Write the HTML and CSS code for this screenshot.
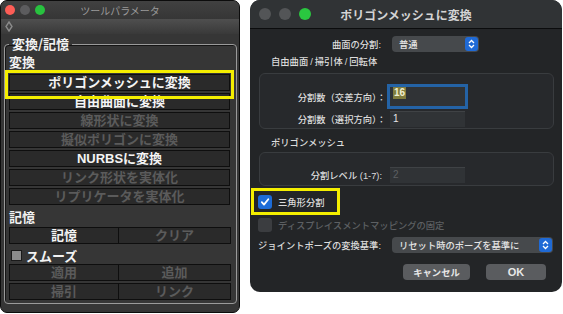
FILE: index.html
```html
<!DOCTYPE html>
<html>
<head>
<meta charset="utf-8">
<link rel="stylesheet" href="styles.css">
</head>
<body>
<div class="desk">

  <div class="tp">
    <div class="tp-title">
      <div class="tp-lights">
        <span class="tl tl-red"></span><span class="tl tl-gray"></span><span class="tl tl-green"></span>
      </div>
      <div class="tp-title-text">ツールパラメータ</div>
      <div></div>
    </div>
    <div class="tp-strip">
      <svg width="8" height="11" viewBox="0 0 8 11"><path d="M4 1 L7 5.5 L4 10 L1 5.5 Z" fill="none" stroke="#8a8a8a" stroke-width="1.4"/></svg>
    </div>
    <fieldset class="tp-group">
      <legend>変換/記憶</legend>
      <div class="tp-label">変換</div>
      <div class="tp-btn first">ポリゴンメッシュに変換</div>
      <div class="tp-btn">自由曲面に変換</div>
      <div class="tp-btn off">線形状に変換</div>
      <div class="tp-btn off">擬似ポリゴンに変換</div>
      <div class="tp-btn">NURBSに変換</div>
      <div class="tp-btn off">リンク形状を実体化</div>
      <div class="tp-btn off">リプリケータを実体化</div>
      <div class="tp-label tp-label2">記憶</div>
      <div class="tp-pair">
        <div class="tp-half">記憶</div>
        <div class="tp-half off">クリア</div>
      </div>
      <div class="tp-check"><span class="tp-box"></span>スムーズ</div>
      <div class="tp-pair tight">
        <div class="tp-half off">適用</div>
        <div class="tp-half off">追加</div>
      </div>
      <div class="tp-pair">
        <div class="tp-half off">掃引</div>
        <div class="tp-half off">リンク</div>
      </div>
    </fieldset>
    <div class="mark mark-tp"></div>
  </div>

  <div class="dlg">
    <div class="dlg-title">
      <div class="dlg-lights">
        <span class="dl dl-gray"></span><span class="dl dl-gray"></span><span class="dl dl-green"></span>
      </div>
      <div class="dlg-title-text">ポリゴンメッシュに変換</div>
      <div></div>
    </div>
    <div class="dlg-body">
      <div class="frow row-top">
        <div class="flabel w-top">曲面の分割:</div>
        <div class="popup popup-small">
          <span>普通</span>
          <span class="stepper">
            <svg width="7" height="10" viewBox="0 0 7 10"><path d="M1 4 L3.5 1.5 L6 4 M1 6 L3.5 8.5 L6 6" fill="none" stroke="#fff" stroke-width="1.3"/></svg>
          </span>
        </div>
      </div>

      <div class="sect">自由曲面<span class="sl">/</span>掃引体<span class="sl">/</span>回転体</div>
      <div class="group group1">
        <div class="frow">
          <div class="flabel w-grp">分割数（交差方向）：</div>
          <div class="field focus"><span class="sel">16</span></div>
        </div>
        <div class="frow row-2">
          <div class="flabel w-grp">分割数（選択方向）：</div>
          <div class="field">1</div>
        </div>
      </div>

      <div class="sect sect2">ポリゴンメッシュ</div>
      <div class="group group2">
        <div class="frow">
          <div class="flabel w-lvl">分割レベル (1-7):</div>
          <div class="field dim">2</div>
        </div>
      </div>

      <div class="crow crow1">
        <span class="cbox on">
          <svg width="10" height="10" viewBox="0 0 10 10"><path d="M1.8 5.2 L4 7.6 L8.3 2.2" fill="none" stroke="#fff" stroke-width="1.8" stroke-linecap="round" stroke-linejoin="round"/></svg>
        </span>
        <span>三角形分割</span>
      </div>
      <div class="crow crow2 dim">
        <span class="cbox"></span>
        <span>ディスプレイスメントマッピングの固定</span>
      </div>

      <div class="frow row-joint">
        <div class="flabel w-joint">ジョイントポーズの変換基準:</div>
        <div class="popup popup-wide">
          <span>リセット時のポーズを基準に</span>
          <span class="stepper">
            <svg width="7" height="10" viewBox="0 0 7 10"><path d="M1 4 L3.5 1.5 L6 4 M1 6 L3.5 8.5 L6 6" fill="none" stroke="#fff" stroke-width="1.3"/></svg>
          </span>
        </div>
      </div>

      <div class="brow">
        <div class="pbtn pbtn-cancel">キャンセル</div>
        <div class="pbtn pbtn-ok">OK</div>
      </div>
    </div>
    <div class="mark mark-dlg"></div>
  </div>

</div>
</body>
</html>
```
FILE: styles.css
```css
*{
    box-sizing: border-box;
}

body{
    margin: 0;
    background: #ffffff;
    font-family: "Liberation Sans", "Noto Sans CJK JP", sans-serif;
}

.desk{
    display: flex;
    align-items: flex-start;
    gap: 10px;
}

/* ---- tool parameter window ---- */

.tp{
    position: relative;
    width: 240px;
    height: 313px;
    background-color: #363636;
    border: 1px solid #0c0c0c;
    border-radius: 7px;
    overflow: hidden;
}

.tp-title{
    height: 18px;
    display: grid;
    grid-template-columns: 1fr auto 1fr;
    align-items: center;
    background: linear-gradient(#414141, #363636);
}

.tp-lights{
    display: flex;
    gap: 5px;
    padding-left: 4px;
}

.tl{
    width: 10px;
    height: 10px;
    border-radius: 50%;
}

.tl-red{ background-color: #fd5d56; }
.tl-gray{ background-color: #5c5c5e; }
.tl-green{ background-color: #28c23f; }

.tp-title-text{
    font-size: 10px;
    color: #9a9a9a;
    font-family: "Noto Sans CJK JP", sans-serif;
}

.tp-strip{
    height: 15px;
    padding-left: 4px;
    display: flex;
    align-items: center;
    background: linear-gradient(#4f4f4f, #393939);
}

.tp-group{
    margin: 2px 2px 0 3px;
    padding: 2px 6px 3px 4px;
    border: 1px solid #9a9a9a;
    border-radius: 4px;
    box-shadow: inset 1px 1px 0 #151515;
    min-width: 0;
}

.tp-group legend{
    margin-left: 0;
    padding: 0 3px;
    font-size: 13px;
    line-height: 16px;
    font-weight: bold;
    color: #f2f2f2;
    font-family: "Noto Sans CJK JP", sans-serif;
}

.tp-label{
    font-size: 13px;
    line-height: 16px;
    font-weight: bold;
    color: #f2f2f2;
    font-family: "Noto Sans CJK JP", sans-serif;
}

.tp-label2{
    margin-top: 4px;
}

.tp-btn, .tp-half{
    height: 17px;
    background-color: #2a2a2a;
    border: 1px solid #0e0e0e;
    text-align: center;
    font-size: 13px;
    line-height: 15px;
    font-weight: bold;
    color: #f4f4f4;
    white-space: nowrap;
}

.tp-btn{
    margin-top: 2px;
}

.tp-btn.first{
    margin-top: 4px;
}

.off{
    color: #5b5b5b;
}

.tp-pair{
    margin-top: 2px;
    display: flex;
    width: 222px;
}

.tp-pair.tight{
    margin-top: 1px;
}

.tp-half{
    flex: 1;
}

.tp-half + .tp-half{
    border-left: none;
}

.tp-half:first-child{
    flex: 0 0 110px;
}

.tp-check{
    margin-top: 3px;
    height: 16px;
    display: flex;
    align-items: center;
    gap: 4px;
    padding-left: 2px;
    font-size: 13px;
    font-weight: bold;
    color: #f2f2f2;
    font-family: "Noto Sans CJK JP", sans-serif;
}

.tp-box{
    width: 11px;
    height: 11px;
    background-color: #8c8c8c;
    border: 1px solid #1a1a1a;
}

/* ---- dialog ---- */

.dlg{
    position: relative;
    width: 312px;
    height: 292px;
    background-color: #232527;
    border-radius: 10px;
    overflow: hidden;
    font-family: "Liberation Sans", "Noto Sans CJK JP", sans-serif;
    font-size: 9.3px;
    font-weight: 500;
    color: #dcdcdc;
}

.dlg-title{
    height: 29px;
    display: grid;
    grid-template-columns: 1fr auto 1fr;
    align-items: center;
    background-color: #303335;
    border-bottom: 1px solid #0b0c0d;
}

.dlg-lights{
    display: flex;
    gap: 8px;
    padding-left: 9px;
}

.dl{
    width: 12px;
    height: 12px;
    border-radius: 50%;
}

.dl-gray{ background-color: #535557; }
.dl-green{ background-color: #2ac740; }

.dlg-title-text{
    font-size: 12px;
    font-weight: bold;
    color: #d4d4d4;
    font-family: "Noto Sans CJK JP", sans-serif;
}

.dlg-body{
    padding: 0 8px;
}

.frow{
    display: flex;
    align-items: center;
}

.flabel{
    text-align: right;
    white-space: nowrap;
}

.row-top{
    margin-top: 7px;
}

.w-top{
    width: 123px;
    margin-right: 11px;
}

.popup{
    height: 16px;
    display: flex;
    align-items: center;
    justify-content: space-between;
    padding: 0 1px 0 7px;
    background-color: #46494c;
    border-radius: 4px;
    color: #e4e4e4;
}

.popup-small{
    width: 87px;
}

.popup-wide{
    width: 161px;
}

.stepper{
    flex: none;
    width: 13px;
    height: 14px;
    display: flex;
    align-items: center;
    justify-content: center;
    background-color: #1f6ad6;
    border-radius: 3px;
}

.sect{
    margin-top: 3px;
    padding-left: 13px;
    line-height: 14px;
}

.sl{
    padding: 0 2px;
}

.sect2{
    margin-top: 7px;
}

.group{
    margin-left: 1px;
    background-color: #27292c;
    border: 1px solid #393c3f;
    border-radius: 6px;
}

.group1{
    margin-top: 4px;
    height: 56px;
    padding-top: 13px;
}

.group2{
    margin-top: 2px;
    height: 34px;
    padding-top: 14px;
}

.w-grp{
    width: 126px;
    margin-right: 4px;
}

.w-lvl{
    width: 122px;
    margin-right: 8px;
}

.field{
    width: 75px;
    height: 16px;
    padding: 0 3px;
    background-color: #303336;
    border-top: 1px solid #3f4245;
    line-height: 14px;
    color: #e6e6e6;
    font-size: 10px;
}

.field.focus{
    height: 19px;
    border-top: none;
    box-shadow: 0 0 0 3px #2463a6;
    line-height: 12px;
}

.sel{
    display: inline-block;
    padding: 0 1px;
    background-color: #807c3d;
    color: #f0efd0;
    font-weight: bold;
}

.row-2{
    margin-top: 5px;
}

.dim{
    color: #5d6063;
}

.crow{
    display: flex;
    align-items: center;
    gap: 6px;
}

.crow1{
    margin-top: 9px;
}

.crow2{
    margin-top: 9px;
}

.cbox{
    width: 14px;
    height: 14px;
    border-radius: 3px;
    background-color: #3b3d40;
    display: flex;
    align-items: center;
    justify-content: center;
}

.cbox.on{
    background-color: #1d6cd8;
}

.row-joint{
    margin-top: 5px;
}

.w-joint{
    width: 123px;
    margin-right: 11px;
}

.brow{
    margin-top: 11px;
    display: flex;
    justify-content: flex-end;
    gap: 16px;
    padding-right: 8px;
}

.pbtn{
    height: 16px;
    display: flex;
    align-items: center;
    justify-content: center;
    background-color: #5a5c5f;
    border-radius: 4px;
    color: #e8e8e8;
    font-weight: bold;
}

.pbtn-cancel{
    width: 67px;
}

.pbtn-ok{
    width: 60px;
    font-size: 11px;
}

/* ---- yellow callouts ---- */

.mark{
    position: absolute;
    border: 3px solid #f4ee00;
}

.mark-tp{
    left: 4px;
    top: 69px;
    width: 229px;
    height: 29px;
}

.mark-dlg{
    left: 1px;
    top: 188px;
    width: 89px;
    height: 27px;
}
```
